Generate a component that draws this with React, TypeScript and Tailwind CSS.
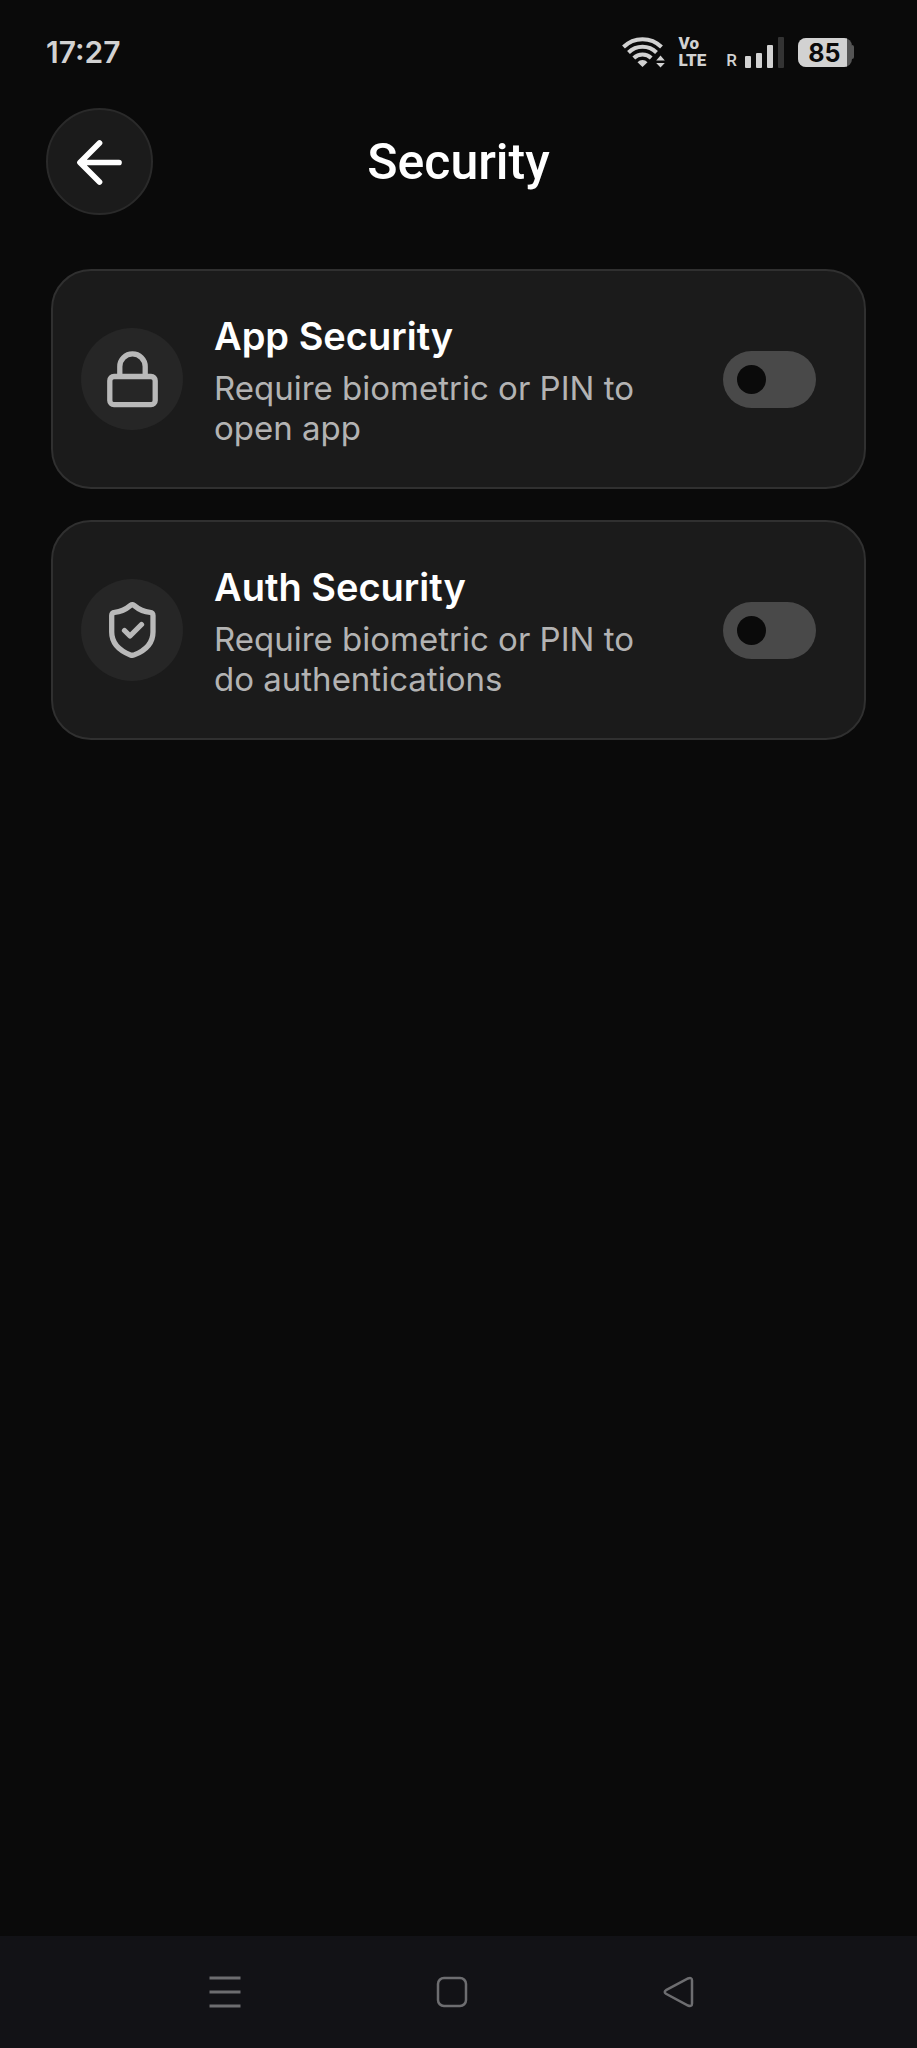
import { useState, type ReactNode } from 'react';

interface SecuritySetting {
  id: string;
  title: string;
  description: string;
  icon: ReactNode;
}

function BackIcon() {
  return (
    <svg
      width="66"
      height="66"
      viewBox="0 0 66 66"
      fill="none"
      stroke="currentColor"
      strokeWidth="5.700"
      strokeLinecap="round"
      strokeLinejoin="round"
      aria-hidden="true"
    >
      <path d="M52 33.500H13.500M32.500 14L13 33.500 32.500 53" />
    </svg>
  );
}

function LockIcon() {
  return (
    <svg width="60" height="60" viewBox="0 0 60 60" fill="none" stroke="currentColor" strokeWidth="5.300" aria-hidden="true">
      <rect x="7.800" y="27.500" width="45.400" height="28.200" rx="4.200" />
      <path d="M17.800 27.500V17.500a12.700 12.700 0 0 1 25.400 0v10" />
    </svg>
  );
}

function ShieldIcon() {
  return (
    <svg
      width="60"
      height="60"
      viewBox="0 0 60 60"
      fill="none"
      stroke="currentColor"
      strokeWidth="5.300"
      strokeLinecap="round"
      strokeLinejoin="round"
      aria-hidden="true"
    >
      <path d="M28.600 5.400Q30.300 4 32 5.400C36.500 9.200 41.500 12 48 12.300Q51 12.500 51 15.500V32C51 43 43.500 50.500 32.200 54.900Q30.300 55.600 28.400 54.900C17.200 50.500 9.700 43 9.700 32V15.500Q9.700 12.500 12.700 12.300C19 12 24 9.200 28.600 5.400Z" />
      <path d="M22.500 30.500l5.500 5.500 11.500-11.500" />
    </svg>
  );
}

const SETTINGS: SecuritySetting[] = [
  {
    id: 'app-security',
    title: 'App Security',
    description: 'Require biometric or PIN to open app',
    icon: <LockIcon />,
  },
  {
    id: 'auth-security',
    title: 'Auth Security',
    description: 'Require biometric or PIN to do authentications',
    icon: <ShieldIcon />,
  },
];

function WifiIcon() {
  return (
    <svg width="44" height="32" viewBox="0 0 44 32" fill="none" aria-hidden="true">
      <g stroke="#d2d2d2" strokeWidth="4">
        <path d="M2.500 11a27 27 0 0 1 38 0" />
        <path d="M7.500 16.500a20 20 0 0 1 28 0" />
        <path d="M12.800 22a12.500 12.500 0 0 1 17.400 0" />
      </g>
      <path d="M21.500 31l-5-4.800a7 7 0 0 1 10 0z" fill="#d2d2d2" />
      <path d="M39.500 19.500l4.300 5h-8.600zM39.500 31.500l4.300-4.500h-8.600z" fill="#d2d2d2" />
    </svg>
  );
}

function SignalIcon() {
  return (
    <svg width="39" height="31" viewBox="0 0 39 31" aria-hidden="true">
      <g fill="#d2d2d2">
        <rect x="0" y="19" width="6" height="12" rx="1" />
        <rect x="11" y="16" width="6" height="15" rx="1" />
        <rect x="22" y="8" width="6" height="23" rx="1" />
      </g>
      <rect x="33" y="0" width="6" height="31" rx="1" fill="#333333" />
    </svg>
  );
}

function Battery({ level }: { level: number }) {
  return (
    <div className="flex items-center">
      <div className="flex h-[29px] w-[54px] overflow-hidden rounded-lg bg-[#555555]">
        <div
          className="flex items-center justify-end bg-[#d2d2d2] pt-[2px] pr-[6px] text-[25px] font-bold leading-none text-[#0a0a0a]"
          style={{ width: `${level + 5}%` }}
        >
          {level}
        </div>
      </div>
      <div className="h-[14px] w-[2px] rounded-r-full bg-[#555555]" />
    </div>
  );
}

function StatusBar() {
  return (
    <div className="flex h-[104px] items-center justify-between pr-[63px] pl-[46px] text-[#d2d2d2]">
      <span className="text-[30px] font-semibold leading-none">17:27</span>
      <div className="flex items-center">
        <WifiIcon />
        <div className="ml-[14px] font-[Roboto] text-[17px] font-black leading-[17px]">
          <div>Vo</div>
          <div>LTE</div>
        </div>
        <div className="ml-5 flex items-end gap-2">
          <span className="font-[Roboto] text-[17px] font-medium leading-[15px]">R</span>
          <SignalIcon />
        </div>
        <div className="ml-[14px]">
          <Battery level={85} />
        </div>
      </div>
    </div>
  );
}

function SettingCard({ setting }: { setting: SecuritySetting }) {
  const [enabled, setEnabled] = useState(false);

  return (
    <li className="flex items-center rounded-[40px] border-2 border-[#303030] bg-[#1b1b1b] py-[39px] pr-12 pl-7">
      <div className="flex size-[102px] shrink-0 items-center justify-center rounded-full bg-[#262626] text-[#b9b9b9]">
        {setting.icon}
      </div>
      <div className="ml-[31px] min-w-0 flex-1">
        <label htmlFor={setting.id} className="mb-[6px] block text-[38px] font-semibold leading-[52px] text-white">
          {setting.title}
        </label>
        <p className="text-[33px] leading-10 text-[#b3b3b3]">{setting.description}</p>
      </div>
      <div className="relative ml-[72px] h-[57px] w-[93px] shrink-0">
        <input
          id={setting.id}
          type="checkbox"
          role="switch"
          checked={enabled}
          onChange={event => setEnabled(event.target.checked)}
          className="peer size-full cursor-pointer appearance-none rounded-full bg-[#494949] transition checked:bg-[#e5e5e5]"
        />
        <span className="pointer-events-none absolute top-[14px] left-[14px] size-[29px] rounded-full bg-[#0a0a0a] transition peer-checked:translate-x-9" />
      </div>
    </li>
  );
}

function NavigationBar() {
  return (
    <nav className="grid h-28 grid-cols-3 bg-[#121216] pr-[125px] pl-[111px] text-[#6d6d70]">
      <button type="button" aria-label="Recent apps" className="flex items-center justify-center">
        <svg width="32" height="32" viewBox="0 0 32 32" fill="none" stroke="currentColor" strokeWidth="3">
          <path d="M0.500 2h31M0.500 16h31M0.500 30h31" />
        </svg>
      </button>
      <button type="button" aria-label="Home" className="flex items-center justify-center">
        <svg width="32" height="32" viewBox="0 0 32 32" fill="none" stroke="currentColor" strokeWidth="2.500">
          <rect x="2" y="2" width="28" height="28" rx="6" />
        </svg>
      </button>
      <button type="button" aria-label="Back" className="flex items-center justify-center">
        <svg width="32" height="32" viewBox="0 0 32 32" fill="none" stroke="currentColor" strokeWidth="2.500">
          <path d="M3 14.200L25 2.500Q29 1 29 4.500V27.500Q29 31 25 29.500L3 17.800Q0.500 16 3 14.200Z" />
        </svg>
      </button>
    </nav>
  );
}

export default function App() {
  return (
    <div className="flex min-h-screen flex-col bg-[#0a0a0a] font-[Inter,sans-serif]">
      <StatusBar />
      <header className="grid grid-cols-[107px_1fr_107px] items-center px-[46px] pt-1">
        <button
          type="button"
          aria-label="Go back"
          className="flex size-[107px] items-center justify-center rounded-full border-2 border-[#2a2a2a] bg-[#1b1b1b] text-white"
        >
          <BackIcon />
        </button>
        <h1 className="text-center font-[Roboto] text-[50px] font-medium leading-[56px] text-white">Security</h1>
      </header>
      <main className="flex-1 px-[51px] pt-[54px]">
        <ul className="flex flex-col gap-[31px]">
          {SETTINGS.map(setting => (
            <SettingCard key={setting.id} setting={setting} />
          ))}
        </ul>
      </main>
      <NavigationBar />
    </div>
  );
}
